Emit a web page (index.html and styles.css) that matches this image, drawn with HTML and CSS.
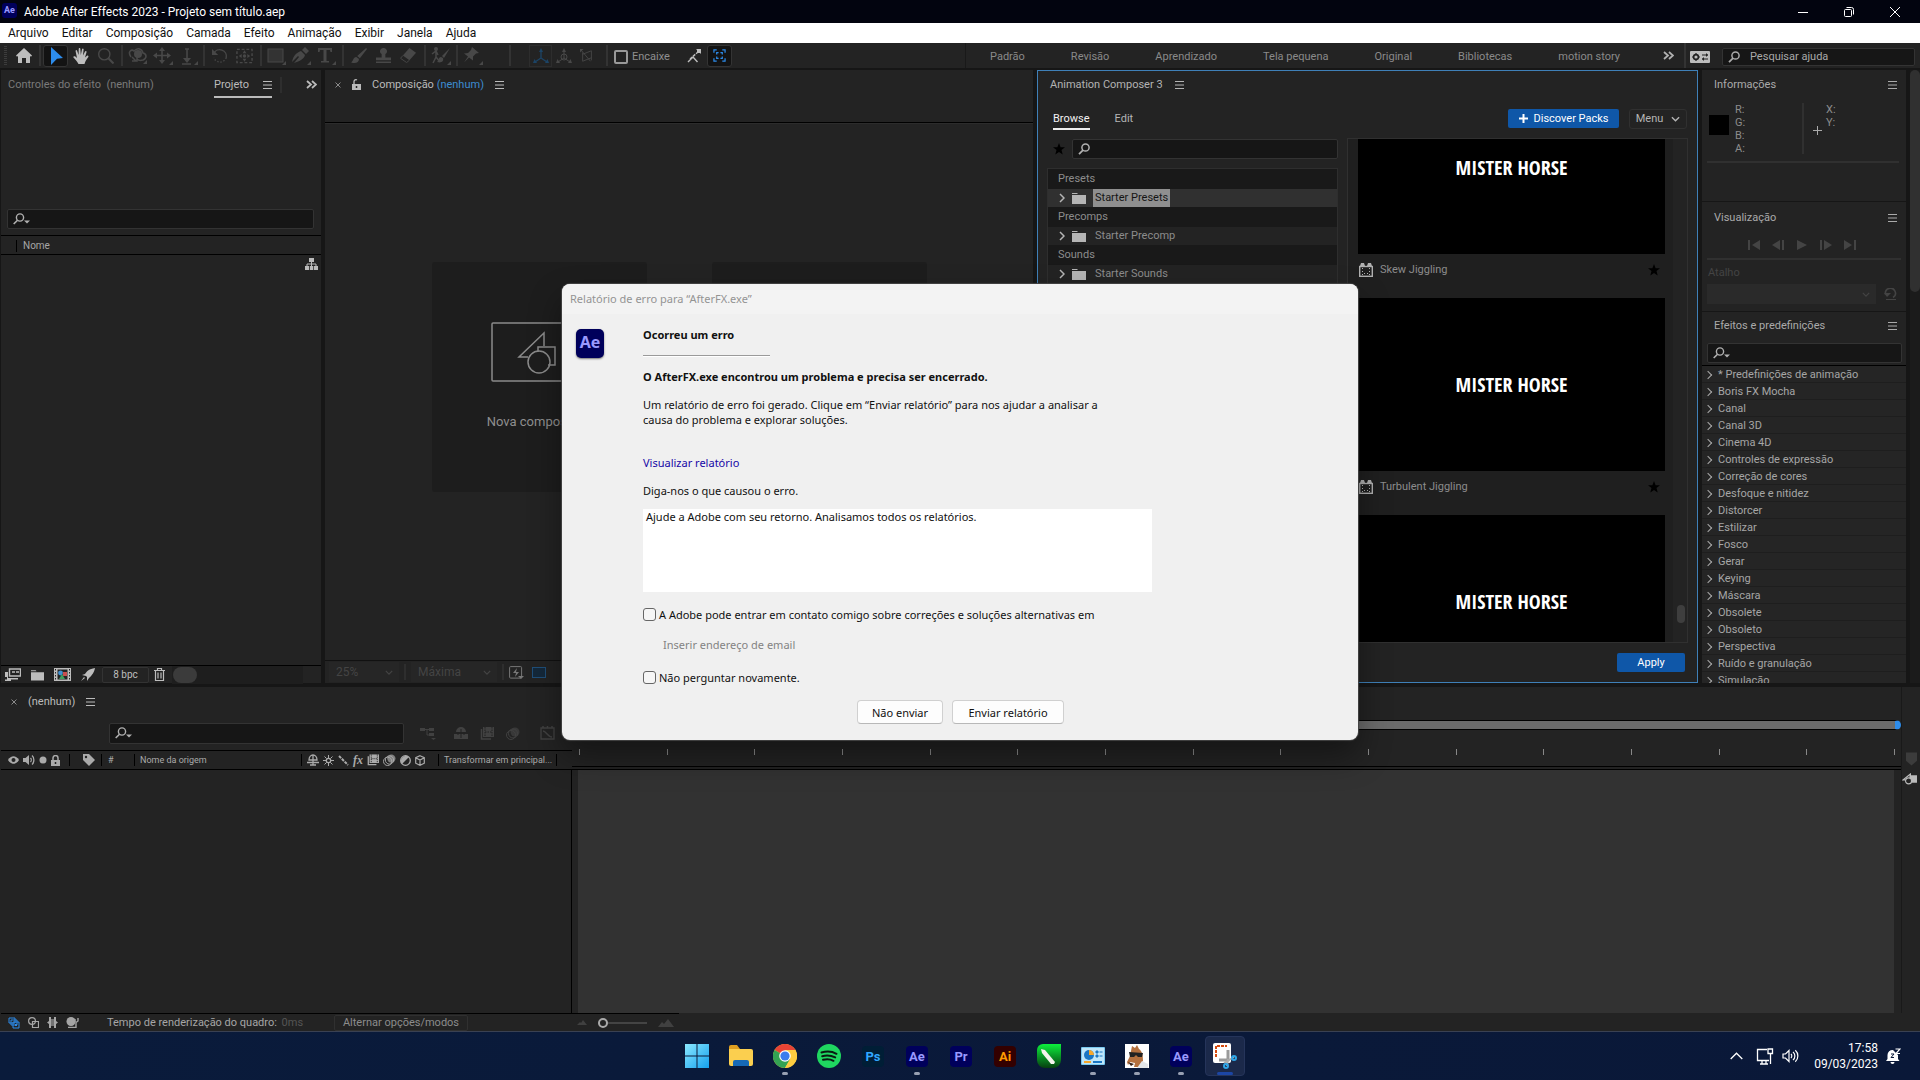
FILE: index.html
```
<!doctype html>
<html lang="pt-BR">
<head>
    <meta charset="utf-8">
    <meta name="viewport" content="width=device-width, initial-scale=1">
    <title>Adobe After Effects 2023 - Projeto sem título.aep</title>
    <link rel="stylesheet" href="styles.css">
</head>
<body>
    <svg class="sprite" aria-hidden="true">
        <symbol id="menu" viewBox="0 0 9 8"><path d="M0 .5h9M0 4h9M0 7.5h9" stroke="currentColor"/></symbol>
        <symbol id="more" viewBox="0 0 11 9"><path d="M1 1l4 3.500L1 8M6 1l4 3.500L6 8" fill="none" stroke="currentColor" stroke-width="1.800"/></symbol>
        <symbol id="chev-r" viewBox="0 0 6 10"><path d="M1 1l4 4-4 4" fill="none" stroke="currentColor" stroke-width="1.500"/></symbol>
        <symbol id="chev-d" viewBox="0 0 10 6"><path d="M1 1l4 4 4-4" fill="none" stroke="currentColor" stroke-width="1.500"/></symbol>
        <symbol id="x" viewBox="0 0 6 6"><path d="M.5.5l5 5M5.500.5l-5 5" stroke="currentColor"/></symbol>
        <symbol id="search" viewBox="0 0 12 12"><circle cx="7.500" cy="4.500" r="3.600" fill="none" stroke="currentColor" stroke-width="1.500"/><path d="M5 7.200L1 11.200" stroke="currentColor" stroke-width="1.800"/></symbol>
        <symbol id="search-d" viewBox="0 0 17 12"><circle cx="7" cy="4.500" r="3.600" fill="none" stroke="currentColor" stroke-width="1.400"/><path d="M4.500 7.200L.7 11" stroke="currentColor" stroke-width="1.600"/><path d="M11 7.500h6l-3 3z" fill="currentColor"/></symbol>
        <symbol id="star" viewBox="0 0 12 12"><path d="M6 0l1.600 4.200H12L8.500 7l1.200 4.600L6 9l-3.700 2.600L3.500 7 0 4.200h4.400z" fill="currentColor"/></symbol>
        <symbol id="folder" viewBox="0 0 14 12"><path d="M0 1h5l1 1H0zM0 3h14v9H0z" fill="currentColor"/></symbol>
        <symbol id="preset" viewBox="0 0 14 14"><path d="M2 0h3l1 3h2l1-3h3l1 3H1z" fill="currentColor"/><rect x=".7" y="3.500" width="12.600" height="9.800" fill="none" stroke="currentColor" stroke-width="1.400"/><path d="M3.500 5v8M10.500 5v8M5 10.500h5" stroke="currentColor" stroke-dasharray="1 2"/></symbol>
        <symbol id="home" viewBox="0 0 16 15"><path d="M8 0l8 7.500-1 1.200-1-.8V15h-4v-5H6v5H2V7.900l-1 .8L0 7.500z" fill="currentColor"/></symbol>
        <symbol id="select" viewBox="0 0 16 18"><path d="M3 0l12 11-6 .8L3 18z" fill="currentColor"/></symbol>
        <symbol id="hand" viewBox="0 0 16 16"><path d="M5.500 16C4 13 2 11 .3 9.200c0-1 1.500-1.300 2.300-.5L4 10 2.600 3.200c-.2-1.300 1.200-1.600 1.500-.4L5.600 7 5.700 1.200c0-1.500 1.700-1.500 1.700 0L7.800 7 9 1.300c.3-1.300 1.800-1 1.600.3L10 7.500l2-4c.6-1.100 1.900-.5 1.500.7L12 9.500l2-1.700c.8-.6 1.900.2 1.300 1.200C13 12 12.500 13 11.500 16z" fill="currentColor"/></symbol>
        <symbol id="zoom" viewBox="0 0 16 16"><circle cx="6.300" cy="6.300" r="5.600" fill="none" stroke="currentColor" stroke-width="1.400"/><path d="M10.300 10.300L15.500 15.500" stroke="currentColor" stroke-width="2"/></symbol>
        <symbol id="orbit" viewBox="0 0 20 16"><path d="M3 9C-1 3 4 1 6 3c4-4 8-2 9 2 4 1 4 5 0 7-3 1-5 0-6-1" fill="none" stroke="currentColor" stroke-width="1.600"/><circle cx="10" cy="6" r="4" fill="currentColor"/><path d="M4 9l4 4M4 13h5V9" fill="none" stroke="currentColor" stroke-width="1.500"/><path d="M19 12v4h-4z" fill="currentColor"/></symbol>
        <symbol id="pan" viewBox="0 0 20 18"><path d="M9 2v13M2 8.500h14" stroke="currentColor" stroke-width="1.600"/><path d="M9 0l3 4H6zM9 17l3-4H6zM0 8.500l4-3v6zM18 8.500l-4-3v6z" fill="currentColor"/><path d="M20 14v4h-4z" fill="currentColor"/></symbol>
        <symbol id="dolly" viewBox="0 0 20 18"><path d="M9 2v13M7 2h4M4 17h9" stroke="currentColor" stroke-width="1.600"/><path d="M9 16l4-5H5z" fill="currentColor"/><path d="M20 14v4h-4z" fill="currentColor"/></symbol>
        <symbol id="rotate" viewBox="0 0 18 18"><path d="M2 6a7.500 7.500 0 0 1 14 5" fill="none" stroke="currentColor" stroke-width="1.600"/><path d="M16 11a7.500 7.500 0 0 1-14 0" fill="none" stroke="currentColor" stroke-width="1.500" stroke-dasharray="1.500 2"/><path d="M0 1v7h7z" fill="currentColor"/></symbol>
        <symbol id="anchor" viewBox="0 0 18 16"><rect x="1" y="1" width="16" height="14" fill="none" stroke="currentColor" stroke-width="1.500" stroke-dasharray="3 2"/><circle cx="9" cy="8" r="1.800" fill="currentColor"/><path d="M9 2l2 3H7zM9 14l2-3H7zM3 8l3-2v4zM15 8l-3-2v4z" fill="currentColor"/></symbol>
        <symbol id="rect" viewBox="0 0 19 18"><rect x="1" y="2" width="15" height="13" fill="#333" stroke="currentColor"/><path d="M19 14v4h-4z" fill="currentColor"/></symbol>
        <symbol id="pen" viewBox="0 0 19 18"><path d="M0 15C1 9 4 6 9 4l4 4c-1 4-5 6-11 8l5-6-1-1z" fill="currentColor"/><path d="M10 3l3-3 4 4-3 3z" fill="currentColor"/><path d="M19 14v4h-4z" fill="currentColor"/></symbol>
        <symbol id="type" viewBox="0 0 19 18"><path d="M1 1h14v4h-1.500L13 3H9.500v11H12v1.500H4V14h2.500V3H3l-.5 2H1z" fill="currentColor"/><path d="M19 14v4h-4z" fill="currentColor"/></symbol>
        <symbol id="brush" viewBox="0 0 18 18"><path d="M17 0L7 9l3 2.500L18 1zM6 10c-4 0-3 5-6 6 4 2 9 1 9-3.500z" fill="currentColor"/></symbol>
        <symbol id="stamp" viewBox="0 0 18 16"><path d="M9 0a3.500 3.500 0 0 1 2 6.500V10h6v3H1v-3h6V6.500A3.500 3.500 0 0 1 9 0zM1 14.500h16V16H1z" fill="currentColor"/></symbol>
        <symbol id="eraser" viewBox="0 0 18 16"><path d="M10 0l7 5-7 8-7-5z" fill="currentColor"/><path d="M3 8l-2.500 3L7 15.500 10 13" fill="none" stroke="currentColor"/></symbol>
        <symbol id="roto" viewBox="0 0 20 18"><circle cx="5" cy="2" r="2" fill="currentColor"/><path d="M1 7l4-3 2 4M5 5v5l-3 6M5 10l4 5" fill="none" stroke="currentColor" stroke-width="1.500"/><path d="M19 1l-8 8 2 2zM10 10c-3 0-2 4-4 5 4 1 7 0 6-4z" fill="currentColor"/><path d="M20 14v4h-4z" fill="currentColor"/></symbol>
        <symbol id="pin" viewBox="0 0 20 18"><path d="M9 0l7 6-3 .5-3 3 0 4-4-3-5 5 4-6-4-3 4-.5 3-3z" fill="currentColor"/><path d="M20 14v4h-4z" fill="currentColor"/></symbol>
        <symbol id="axis" viewBox="0 0 16 16"><path d="M8 2v8L2 14M8 10l6 4" fill="none" stroke="currentColor" stroke-width="1.300"/><path d="M8 0l2 4H6zM0 15l1.500-4L4 15zM16 15l-1.500-4L12 15z" fill="currentColor"/></symbol>
        <symbol id="axis-w" viewBox="0 0 16 16"><path d="M8 2v8L2 14M8 10l6 4" fill="none" stroke="currentColor"/><circle cx="8" cy="9" r="3" fill="none" stroke="currentColor"/><path d="M8 0l2 4H6zM0 15l1.500-4L4 15zM16 15l-1.500-4L12 15z" fill="currentColor"/></symbol>
        <symbol id="axis-v" viewBox="0 0 16 16"><path d="M3 6l10-4v11M3 4v10l10-4M1 1l11 13" fill="none" stroke="currentColor"/><path d="M0 0h4L0 4z" fill="currentColor"/></symbol>
        <symbol id="snap" viewBox="0 0 14 14"><path d="M1 13l5-5 4.500 5" fill="none" stroke="currentColor" stroke-width="1.400"/><path d="M3 10L11 3" fill="none" stroke="currentColor" stroke-width="1.400" stroke-dasharray="3 1"/><path d="M9 0h5v5z" fill="currentColor"/><path d="M10 1h3v3h-3z" fill="currentColor"/></symbol>
        <symbol id="snap-box" viewBox="0 0 14 14"><path d="M1 4V1h3M10 1h3v3M13 10v3h-3M4 13H1v-3M4 6V4h2M8 4h2v2M10 8v2H8M6 10H4V8" fill="none" stroke="currentColor" stroke-width="1.300"/></symbol>
        <symbol id="settings" viewBox="0 0 20 12"><rect width="20" height="12" rx="1" fill="currentColor"/><circle cx="6" cy="6" r="2.400" fill="none" stroke="#232323" stroke-width="1.600"/><path d="M6 2v1.500M6 8.500V10M2 6h1.500M8.500 6H10M12 4h6M12 8h6" stroke="#232323" stroke-width="1.200"/><path d="M16 2l2 2-2 2zM14 6v4l-2-2z" fill="#232323"/></symbol>
        <symbol id="lock-open" viewBox="0 0 9 11"><path d="M0 5h9v6H0z" fill="currentColor"/><path d="M2 5V2.500a2 2 0 0 1 3-1.500" fill="none" stroke="currentColor" stroke-width="1.300"/><path d="M4.500 7v2" stroke="#232323" stroke-width="1.500"/></symbol>
        <symbol id="lock" viewBox="0 0 9 11"><path d="M0 5h9v6H0z" fill="currentColor"/><path d="M2 5V3a2.500 2.500 0 0 1 5 0v2" fill="none" stroke="currentColor" stroke-width="1.500"/><path d="M4.500 7v2" stroke="#232323" stroke-width="1.500"/></symbol>
        <symbol id="tree" viewBox="0 0 13 12"><path d="M4 0h5v4H4zM0 8h4v4H0zM9 8h4v4H9zM4.800 8h3.500v4H4.800z" fill="currentColor"/><path d="M6.500 4v4M2 8V6h9v2" fill="none" stroke="currentColor"/></symbol>
        <symbol id="footage" viewBox="0 0 16 13"><path d="M4.500 1h11v7h-11z" fill="none" stroke="currentColor" stroke-width="1.400"/><path d="M7 4h3M11 4h3" stroke="currentColor" stroke-width="1.500"/><path d="M0 4h3v6h10v1.500H6V13H0v-1.500h2V9H0z" fill="currentColor"/></symbol>
        <symbol id="film" viewBox="0 0 17 13"><path d="M0 0h17v13H0z" fill="currentColor"/><path d="M3.500 1.500h10v10h-10z" fill="#232323"/><path d="M1.500 1v11M15.500 1v11" stroke="#232323" stroke-dasharray="1.500 1.500"/><circle cx="6.500" cy="5" r="2.400" fill="#3f8fd0"/><path d="M9 4h4v4H9z" fill="#c94e4e"/><path d="M8 6l3 5H5z" fill="#3f9d5f"/></symbol>
        <symbol id="rocket" viewBox="0 0 14 13"><path d="M14 0C8 1 6 3 4 6L1 7l4 1 1 1v4l2-3c3-3 5-5 6-10zM3 9l-3 4 4-3z" fill="currentColor"/></symbol>
        <symbol id="trash" viewBox="0 0 11 13"><path d="M0 2.500h11M3.500 2V.5h4V2M1.500 3v9.500h8V3M4 4.500v6M7 4.500v6" fill="none" stroke="currentColor" stroke-width="1.200"/></symbol>
        <symbol id="fast" viewBox="0 0 15 13"><rect x=".6" y=".6" width="12" height="11.500" rx="1" fill="none" stroke="currentColor"/><path d="M8 2L4 7h3l-1 4 4-5H7z" fill="currentColor"/><path d="M9 10h6l-3 3z" fill="currentColor"/></symbol>
        <symbol id="flow" viewBox="0 0 16 13"><path d="M0 1h5v3H0zM9 1h5v3H9zM9 6h5v3H9z" fill="currentColor"/><path d="M5 2.500h4M7 2.500V8h2" stroke="currentColor" fill="none"/><path d="M11 11h5l-2.500 2z" fill="currentColor"/></symbol>
        <symbol id="shy" viewBox="0 0 14 12"><path d="M2 5a5 5 0 0 1 10 0zM0 7h14v5H0z" fill="currentColor"/><path d="M7 2v9M4 5v3M10 5v3" stroke="#232323"/></symbol>
        <symbol id="blend" viewBox="0 0 14 13"><path d="M3 0h11v10H3z" fill="currentColor"/><path d="M1.500 2v10H11" fill="none" stroke="currentColor" stroke-width="1.500"/><path d="M5 0v10M12 0v10M5 5h7" stroke="#232323" stroke-dasharray="1.500 1"/></symbol>
        <symbol id="blur" viewBox="0 0 14 13"><circle cx="9" cy="5" r="4.500" fill="currentColor" opacity=".7"/><circle cx="7" cy="6.500" r="4.500" fill="none" stroke="currentColor"/><circle cx="5" cy="8" r="4.500" fill="none" stroke="currentColor"/></symbol>
        <symbol id="graph" viewBox="0 0 15 14"><path d="M1 2h13v11H1z" fill="none" stroke="currentColor" stroke-width="1.300"/><path d="M3 5c3 0 5 6 9 6M3 0v2M7.500 0v2M12 0v2" fill="none" stroke="currentColor" stroke-width="1.500"/></symbol>
        <symbol id="eye" viewBox="0 0 11 8"><path d="M0 4c3-5 8-5 11 0-3 5-8 5-11 0z" fill="currentColor"/><circle cx="5.500" cy="4" r="2" fill="#232323"/></symbol>
        <symbol id="audio" viewBox="0 0 12 12"><path d="M0 4h2.500L6 1v10L2.500 8H0z" fill="currentColor"/><path d="M7.500 4c1 1 1 3 0 4M9 1.500c2.500 2 2.500 7 0 9" fill="none" stroke="currentColor" stroke-width="1.300"/></symbol>
        <symbol id="dot" viewBox="0 0 8 8"><circle cx="4" cy="4" r="3.500" fill="currentColor"/></symbol>
        <symbol id="tag" viewBox="0 0 12 12"><path d="M0 0h6l6 6-6 6-6-6z" fill="currentColor"/><circle cx="3" cy="3" r="1.200" fill="#232323"/></symbol>
        <symbol id="shy-s" viewBox="0 0 12 12"><path d="M2 6a4 5 0 0 1 8 0z" fill="none" stroke="currentColor" stroke-width="1.300"/><path d="M6 1v10M0 8.500h12M3 11h6" fill="none" stroke="currentColor" stroke-width="1.300"/></symbol>
        <symbol id="sun" viewBox="0 0 11 11"><circle cx="5.500" cy="5.500" r="2.200" fill="none" stroke="currentColor" stroke-width="1.300"/><path d="M5.500 0v3M5.500 8v3M0 5.500h3M8 5.500h3M1.500 1.500l2 2M7.500 7.500l2 2M9.500 1.500l-2 2M3.500 7.500l-2 2" stroke="currentColor"/></symbol>
        <symbol id="quality" viewBox="0 0 11 11"><path d="M1 1l9 9" stroke="currentColor" stroke-width="2" stroke-dasharray="3 1"/></symbol>
        <symbol id="adjust" viewBox="0 0 11 11"><circle cx="5.500" cy="5.500" r="4.800" fill="none" stroke="currentColor" stroke-width="1.300"/><path d="M9 2L2 9A5 5 0 0 1 9 2z" fill="currentColor"/></symbol>
        <symbol id="cube" viewBox="0 0 10 11"><path d="M5 .7l4.300 2v5.500L5 10.300.7 8.200V2.700zM.7 2.700L5 5l4.300-2.300M5 5v5" fill="none" stroke="currentColor" stroke-width="1.200"/></symbol>
        <symbol id="layers" viewBox="0 0 12 12"><path d="M1 1h6v5H1zM3 3h6v5H3zM5 5h6v6H5z" fill="#232323" stroke="currentColor"/><path d="M8 7v2" stroke="currentColor" stroke-width="2"/></symbol>
        <symbol id="pair" viewBox="0 0 11 11"><circle cx="4" cy="4" r="3.400" fill="none" stroke="currentColor" stroke-width="1.200"/><path d="M4.500 4.500h6v6h-6z" fill="none" stroke="currentColor" stroke-width="1.200"/></symbol>
        <symbol id="brace" viewBox="0 0 11 11"><path d="M2 0h2v11H2V7L0 5.500 2 4zM9 0H7v11h2V7l2-1.500L9 4z" fill="currentColor"/><path d="M4 2h3v7H4z" fill="currentColor" opacity=".6"/></symbol>
        <symbol id="snail" viewBox="0 0 13 11"><circle cx="5" cy="4.500" r="4.500" fill="currentColor"/><path d="M2 10.500h8V5.500L12 4V1M9 2v3" fill="none" stroke="currentColor" stroke-width="1.400"/></symbol>
        <symbol id="mtn-s" viewBox="0 0 10 5"><path d="M0 5l3-3 1 1 2-3 4 5z" fill="currentColor"/></symbol>
        <symbol id="mtn-l" viewBox="0 0 16 8"><path d="M0 8l4-5 2 2 4-5 6 8z" fill="currentColor"/></symbol>
        <symbol id="shapes" viewBox="0 0 16 12"><path d="M9 .7L1 7h8z" fill="#232323" stroke="currentColor" stroke-width="1.200"/><path d="M8 2h8v8H8z" fill="currentColor"/><circle cx="7" cy="8" r="3.200" fill="#232323" stroke="currentColor" stroke-width="1.200"/></symbol>
        <symbol id="marker" viewBox="0 0 12 14"><path d="M0 0h12v9l-6 5-6-5z" fill="currentColor"/></symbol>
        <symbol id="first" viewBox="0 0 12 10"><path d="M0 0h2v10H0zM12 0v10L4 5z" fill="currentColor"/></symbol>
        <symbol id="prev" viewBox="0 0 12 10"><path d="M8 0v10L0 5zM10 0h2v10h-2z" fill="currentColor"/></symbol>
        <symbol id="play" viewBox="0 0 12 10"><path d="M1 0v10l10-5z" fill="currentColor"/></symbol>
        <symbol id="next" viewBox="0 0 12 10"><path d="M0 0h2v10H0zM4 0v10l8-5z" fill="currentColor"/></symbol>
        <symbol id="last" viewBox="0 0 12 10"><path d="M0 0v10l8-5zM10 0h2v10h-2z" fill="currentColor"/></symbol>
        <symbol id="reset" viewBox="0 0 13 12"><path d="M2 6h-.5A5 5 0 1 1 9 9.500" fill="none" stroke="currentColor" stroke-width="1.600"/><path d="M0 5h7L3 9zM2 11h10v1H2z" fill="currentColor"/></symbol>
    </svg>

    <header class="titlebar">
        <span class="ae-mini">Ae</span>
        <h1>Adobe After Effects 2023 - Projeto sem título.aep</h1>
        <div class="window-buttons">
            <button aria-label="Minimizar"><svg width="10" height="10"><path d="M0 5.500h10" stroke="#fff"/></svg></button>
            <button aria-label="Restaurar"><svg width="10" height="10" fill="none" stroke="#fff"><rect x=".5" y="2.500" width="7" height="7" rx="1"/><path d="M2.500.5h5a2 2 0 0 1 2 2v5"/></svg></button>
            <button aria-label="Fechar"><svg width="10" height="10"><path d="M0 0l10 10M10 0L0 10" stroke="#fff"/></svg></button>
        </div>
    </header>

    <nav class="menubar">
        <a href="#">Arquivo</a><a href="#">Editar</a><a href="#">Composição</a><a href="#">Camada</a><a href="#">Efeito</a><a href="#">Animação</a><a href="#">Exibir</a><a href="#">Janela</a><a href="#">Ajuda</a>
    </nav>

    <div class="toolbar">
        <span class="grip"></span>
        <div class="tools first lit"><button aria-label="Início"><svg width="16" height="15"><use href="#home"/></svg></button></div>
        <div class="tools lit">
            <button class="on" aria-label="Seleção"><svg width="16" height="18"><use href="#select"/></svg></button>
            <button aria-label="Mão"><svg width="16" height="16"><use href="#hand"/></svg></button>
            <button class="dim" aria-label="Zoom"><svg width="16" height="16"><use href="#zoom"/></svg></button>
        </div>
        <div class="tools">
            <button aria-label="Órbita"><svg width="20" height="16"><use href="#orbit"/></svg></button>
            <button aria-label="Panorâmica"><svg width="20" height="18"><use href="#pan"/></svg></button>
            <button aria-label="Dolly"><svg width="20" height="18"><use href="#dolly"/></svg></button>
        </div>
        <div class="tools">
            <button aria-label="Rotação"><svg width="16" height="16"><use href="#rotate"/></svg></button>
            <button aria-label="Ponto de ancoragem"><svg width="17" height="16"><use href="#anchor"/></svg></button>
        </div>
        <div class="tools">
            <button aria-label="Retângulo"><svg width="19" height="18"><use href="#rect"/></svg></button>
            <button aria-label="Caneta"><svg width="19" height="18"><use href="#pen"/></svg></button>
            <button aria-label="Texto"><svg width="19" height="18"><use href="#type"/></svg></button>
        </div>
        <div class="tools">
            <button aria-label="Pincel"><svg width="16" height="16"><use href="#brush"/></svg></button>
            <button aria-label="Carimbo"><svg width="17" height="15"><use href="#stamp"/></svg></button>
            <button aria-label="Borracha"><svg width="17" height="15"><use href="#eraser"/></svg></button>
        </div>
        <div class="tools"><button aria-label="Roto"><svg width="20" height="18"><use href="#roto"/></svg></button></div>
        <div class="tools pins"><button aria-label="Marionete"><svg width="20" height="18"><use href="#pin"/></svg></button></div>
        <div class="tools axes">
            <button class="axis-on" aria-label="Eixo local"><svg width="16" height="16"><use href="#axis"/></svg></button>
            <button aria-label="Eixo global"><svg width="16" height="16"><use href="#axis-w"/></svg></button>
            <button aria-label="Eixo de exibição"><svg width="14" height="14"><use href="#axis-v"/></svg></button>
        </div>
        <div class="tools snapping">
            <label class="snap"><input type="checkbox">Encaixe</label>
            <button class="lit-btn" aria-label="Encaixar bordas"><svg width="14" height="14"><use href="#snap"/></svg></button>
            <button class="on" aria-label="Encaixar recursos"><svg width="13" height="13"><use href="#snap-box"/></svg></button>
        </div>
        <nav class="workspaces">
            <a href="#">Padrão</a><a href="#">Revisão</a><a href="#">Aprendizado</a><a href="#">Tela pequena</a><a href="#">Original</a><a href="#">Bibliotecas</a><a href="#">motion story</a>
            <button aria-label="Mais"><svg width="11" height="9"><use href="#more"/></svg></button>
        </nav>
        <div class="help">
            <button aria-label="Espaço de trabalho"><svg width="20" height="12"><use href="#settings"/></svg></button>
            <label class="field"><svg width="12" height="12"><use href="#search"/></svg><input type="text" aria-label="Pesquisar ajuda" value="Pesquisar ajuda"></label>
        </div>
    </div>

    <main class="workspace">
        <section class="panel project">
            <div class="tabs">
                <a href="#">Controles do efeito&nbsp; (nenhum)</a>
                <a href="#" class="active">Projeto<svg width="9" height="8"><use href="#menu"/></svg></a>
                <span class="bar"></span>
                <button aria-label="Mais painéis"><svg width="11" height="9"><use href="#more"/></svg></button>
            </div>
            <label class="field project-search"><svg width="17" height="12"><use href="#search-d"/></svg><input type="text" aria-label="Pesquisar projeto"></label>
            <div class="columns"><span>Nome</span></div>
            <div class="assets"><svg width="13" height="12"><use href="#tree"/></svg></div>
            <div class="project-foot">
                <button aria-label="Interpretar"><svg width="16" height="13"><use href="#footage"/></svg></button>
                <button aria-label="Nova pasta"><svg width="13" height="12"><use href="#folder"/></svg></button>
                <button aria-label="Nova composição"><svg width="17" height="13"><use href="#film"/></svg></button>
                <button aria-label="Configurações"><svg width="14" height="13"><use href="#rocket"/></svg></button>
                <button class="depth">8 bpc</button>
                <button aria-label="Excluir"><svg width="11" height="13"><use href="#trash"/></svg></button>
                <span class="track"><i></i></span>
            </div>
        </section>

        <section class="panel comp">
            <div class="comp-tab">
                <svg class="close" width="6" height="6"><use href="#x"/></svg>
                <svg width="9" height="11"><use href="#lock-open"/></svg>
                <span>Composição <em>(nenhum)</em></span>
                <svg width="9" height="8"><use href="#menu"/></svg>
            </div>
            <div class="stage">
                <button class="card">
                    <svg width="96" height="60" fill="none" stroke="#8a8a8a" stroke-width="1.500"><rect x="1" y="1" width="94" height="58" rx="1"/><path d="M53 24V11L28 35h9M47 30v-5h17v18h-7"/><circle cx="48" cy="40" r="11"/></svg>
                    <span>Nova composição</span>
                </button>
                <button class="card" aria-label="Nova composição com base no item"></button>
            </div>
            <div class="comp-foot">
                <label class="select zoom-level"><select aria-label="Ampliação"><option>25%</option></select><svg width="8" height="5"><use href="#chev-d"/></svg></label>
                <span class="bar"></span>
                <label class="select resolution"><select aria-label="Resolução"><option>Máxima</option></select><svg width="8" height="5"><use href="#chev-d"/></svg></label>
                <span class="bar"></span>
                <svg class="fast" width="15" height="13"><use href="#fast"/></svg>
                <i class="blue-box"></i>
            </div>
        </section>

        <section class="panel composer">
            <div class="composer-title">Animation Composer 3<svg width="9" height="8"><use href="#menu"/></svg></div>
            <div class="composer-nav">
                <a href="#" class="active">Browse</a>
                <a href="#">Edit</a>
                <button class="primary"><svg width="9" height="9"><path d="M4.500 0v9M0 4.500h9" stroke="#fff" stroke-width="2"/></svg>Discover Packs</button>
                <button class="menu-btn">Menu<svg width="9" height="6"><use href="#chev-d"/></svg></button>
            </div>
            <div class="composer-body">
                <div class="library">
                    <div class="library-search">
                        <svg class="star" width="12" height="12"><use href="#star"/></svg>
                        <label class="field"><svg width="12" height="12"><use href="#search"/></svg><input type="text" aria-label="Search presets"></label>
                    </div>
                    <div class="packs">
                        <h3>Presets</h3>
                        <p class="selected"><svg width="6" height="10"><use href="#chev-r"/></svg><svg width="14" height="12"><use href="#folder"/></svg><span>Starter Presets</span></p>
                        <h3>Precomps</h3>
                        <p><svg width="6" height="10"><use href="#chev-r"/></svg><svg width="14" height="12"><use href="#folder"/></svg><span>Starter Precomp</span></p>
                        <h3>Sounds</h3>
                        <p><svg width="6" height="10"><use href="#chev-r"/></svg><svg width="14" height="12"><use href="#folder"/></svg><span>Starter Sounds</span></p>
                    </div>
                </div>
                <div class="previews">
                    <div class="preview-list">
                        <figure><div class="thumb">MISTER HORSE</div><figcaption><svg width="14" height="14"><use href="#preset"/></svg>Skew Jiggling<svg class="star" width="12" height="12"><use href="#star"/></svg></figcaption></figure>
                        <figure><div class="thumb">MISTER HORSE</div><figcaption><svg width="14" height="14"><use href="#preset"/></svg>Turbulent Jiggling<svg class="star" width="12" height="12"><use href="#star"/></svg></figcaption></figure>
                        <figure><div class="thumb">MISTER HORSE</div></figure>
                    </div>
                    <div class="scroll"><i></i></div>
                </div>
            </div>
            <div class="composer-foot"><button class="primary apply">Apply</button></div>
        </section>

        <aside class="side">
            <section class="panel info">
                <h2>Informações<svg width="9" height="8"><use href="#menu"/></svg></h2>
                <div class="info-body">
                    <i class="swatch"></i>
                    <div class="values"><span>R:</span><span>G:</span><span>B:</span><span>A:</span></div>
                    <svg width="9" height="9"><path d="M4.500 0v9M0 4.500h9" stroke="#aaa"/></svg>
                    <div class="values"><span>X:</span><span>Y:</span></div>
                </div>
            </section>
            <section class="panel preview">
                <h2>Visualização<svg width="9" height="8"><use href="#menu"/></svg></h2>
                <div class="transport">
                    <svg width="12" height="10"><use href="#first"/></svg><svg width="12" height="10"><use href="#prev"/></svg><svg width="12" height="10"><use href="#play"/></svg><svg width="12" height="10"><use href="#next"/></svg><svg width="12" height="10"><use href="#last"/></svg>
                </div>
                <label class="shortcut-label" for="shortcut">Atalho</label>
                <div class="shortcut">
                    <div class="select"><select id="shortcut"><option></option></select><svg width="8" height="5"><use href="#chev-d"/></svg></div>
                    <svg width="13" height="12"><use href="#reset"/></svg>
                </div>
            </section>
            <section class="panel effects">
                <h2>Efeitos e predefinições<svg width="9" height="8"><use href="#menu"/></svg></h2>
                <label class="field"><svg width="17" height="12"><use href="#search-d"/></svg><input type="text" aria-label="Pesquisar efeitos"></label>
                <ul>
                    <li>* Predefinições de animação</li>
                    <li>Boris FX Mocha</li>
                    <li>Canal</li>
                    <li>Canal 3D</li>
                    <li>Cinema 4D</li>
                    <li>Controles de expressão</li>
                    <li>Correção de cores</li>
                    <li>Desfoque e nitidez</li>
                    <li>Distorcer</li>
                    <li>Estilizar</li>
                    <li>Fosco</li>
                    <li>Gerar</li>
                    <li>Keying</li>
                    <li>Máscara</li>
                    <li>Obsolete</li>
                    <li>Obsoleto</li>
                    <li>Perspectiva</li>
                    <li>Ruído e granulação</li>
                    <li>Simulação</li>
                </ul>
            </section>
        </aside>
        <div class="side-scroll"><i></i></div>
    </main>

    <section class="timeline">
        <div class="timeline-main">
            <div class="layers">
                <div class="comp-tab">
                    <svg class="close" width="6" height="6"><use href="#x"/></svg>
                    <span>(nenhum)</span>
                    <svg width="9" height="8"><use href="#menu"/></svg>
                </div>
                <div class="layer-tools">
                    <label class="field"><svg width="17" height="12"><use href="#search-d"/></svg><input type="text" aria-label="Pesquisar camadas"></label>
                    <svg width="16" height="13"><use href="#flow"/></svg>
                    <svg width="14" height="12"><use href="#shy"/></svg>
                    <svg width="14" height="13"><use href="#blend"/></svg>
                    <svg width="14" height="13"><use href="#blur"/></svg>
                    <svg width="15" height="14"><use href="#graph"/></svg>
                </div>
                <div class="layer-head">
                    <span class="switches"><svg width="11" height="8"><use href="#eye"/></svg><svg width="12" height="12"><use href="#audio"/></svg><svg width="8" height="8"><use href="#dot"/></svg><svg width="9" height="11"><use href="#lock"/></svg></span>
                    <span class="label-col"><svg width="12" height="12"><use href="#tag"/></svg></span>
                    <span class="num-col">#</span>
                    <span class="name-col">Nome da origem</span>
                    <span class="modes"><svg width="12" height="12"><use href="#shy-s"/></svg><svg width="11" height="11"><use href="#sun"/></svg><svg width="11" height="11"><use href="#quality"/></svg><em>fx</em><svg width="12" height="12"><use href="#blend"/></svg><svg width="13" height="12"><use href="#blur"/></svg><svg width="11" height="11"><use href="#adjust"/></svg><svg width="10" height="11"><use href="#cube"/></svg></span>
                    <span class="parent-col">Transformar em principal...</span>
                </div>
                <div class="layer-list"></div>
            </div>
            <div class="ruler">
                <div class="work-area"></div>
                <div class="ticks"><i></i><i></i><i></i><i></i><i></i><i></i><i></i><i></i><i></i><i></i><i></i><i></i><i></i><i></i><i></i><i></i></div>
                <div class="gutter"></div>
                <div class="lanes"></div>
            </div>
            <div class="markers">
                <svg class="marker" width="11" height="14"><use href="#marker"/></svg>
                <svg width="15" height="12"><use href="#shapes"/></svg>
            </div>
        </div>
        <div class="timeline-foot">
            <div class="render">
                <svg class="blue" width="12" height="12"><use href="#layers"/></svg>
                <svg width="11" height="11"><use href="#pair"/></svg>
                <svg width="11" height="11"><use href="#brace"/></svg>
                <svg width="13" height="11"><use href="#snail"/></svg>
                <p>Tempo de renderização do quadro: <b>0ms</b></p>
                <button>Alternar opções/modos</button>
            </div>
            <div class="zoomer">
                <svg width="10" height="5"><use href="#mtn-s"/></svg>
                <input type="range" aria-label="Zoom da linha do tempo" value="0">
                <svg width="16" height="8"><use href="#mtn-l"/></svg>
            </div>
        </div>
    </section>

    <footer class="taskbar">
        <div class="apps">
            <a href="#" aria-label="Iniciar"><svg width="24" height="24"><defs><linearGradient id="win" x1="0" y1="0" x2="1" y2="1"><stop offset="0" stop-color="#8be8ff"/><stop offset="1" stop-color="#14a0ee"/></linearGradient></defs><path d="M0 0h11.500v11.500H0zM12.500 0H24v11.500H12.500zM0 12.500h11.500V24H0zM12.500 12.500H24V24H12.500z" fill="url(#win)"/></svg></a>
            <a href="#" aria-label="Explorador"><svg width="24" height="22"><path d="M0 2a2 2 0 0 1 2-2h6l3 4h-11z" fill="#e0a021"/><path d="M0 4h22a2 2 0 0 1 2 2v13a2 2 0 0 1-2 2H2a2 2 0 0 1-2-2z" fill="#fbcf4f"/><path d="M4 21v-4a2 2 0 0 1 2-2h12a2 2 0 0 1 2 2v4z" fill="#1769b5"/></svg></a>
            <a href="#" class="open" aria-label="Chrome"><svg width="24" height="24"><circle cx="12" cy="12" r="12" fill="#ffcd40"/><path d="M12 12L1.600 6A12 12 0 0 1 22.400 6z" fill="#e94335"/><path d="M12 12L1.600 6A12 12 0 0 0 12 24z" fill="#34a353"/><path d="M12 24l5.200-9-5.200-3-4 4z" fill="#34a353"/><path d="M17.200 15L12 24A12 12 0 0 0 22.400 6H12z" fill="#ffcd40"/><circle cx="12" cy="12" r="5.800" fill="#fff"/><circle cx="12" cy="12" r="4.600" fill="#3b7ded"/></svg></a>
            <a href="#" aria-label="Spotify"><svg width="24" height="24"><circle cx="12" cy="12" r="12" fill="#1fd760"/><path d="M4.500 8.500c5-1.500 11-1 15 1.300M5.200 12.200c4.500-1.200 9-.7 13 1.200M6 15.800c4-1 7.500-.6 10.500 1" fill="none" stroke="#0a1b12" stroke-width="2" stroke-linecap="round"/></svg></a>
            <a href="#"><span class="tile ps">Ps</span></a>
            <a href="#" class="open"><span class="tile ae">Ae</span></a>
            <a href="#"><span class="tile pr">Pr</span></a>
            <a href="#"><span class="tile ai">Ai</span></a>
            <a href="#" aria-label="CorelDRAW"><svg width="24" height="24"><defs><linearGradient id="corel" x1="0" y1="0" x2="0" y2="1"><stop offset="0" stop-color="#0cf03c"/><stop offset="1" stop-color="#073f10"/></linearGradient></defs><path d="M6 0h18v16a8 8 0 0 1-8 8H8a8 8 0 0 1-8-8V6a6 6 0 0 1 6-6z" fill="url(#corel)"/><path d="M4 5l4 1 10 12-1 2-3 0L5 9z" fill="#f4f4ec"/></svg></a>
            <a href="#" class="open" aria-label="Painel"><svg width="24" height="18"><rect width="24" height="18" rx="1" fill="#79c9f0"/><rect x="1" y="1" width="22" height="16" fill="#bfe6fa"/><circle cx="8" cy="8" r="5" fill="#1a76c4"/><path d="M8 8V3a5 5 0 0 1 5 5z" fill="#f6a72c"/><path d="M15 4h2v2h-2zM15 8h2v2h-2zM18.500 5h3M18.500 9h3" fill="#1a76c4" stroke="#1a76c4"/><path d="M3 15h7" stroke="#f6a72c" stroke-width="2"/><path d="M12 15h9" stroke="#1a76c4" stroke-width="2"/></svg></a>
            <a href="#" class="open" aria-label="Mister Horse"><svg width="24" height="24"><rect width="24" height="24" fill="#fff"/><path d="M6 7l1-5 3 2 2-3 2 4c3 2 4 6 4 12l-3 6H9l1-4-5-1-2 3-1-3 3-6z" fill="#b5713f"/><path d="M4 8l14 1-1 4h-4l-2-2-2 2H5z" fill="#222"/><path d="M3 18l6 2-3 2z" fill="#3b2216"/><path d="M17 17l6 3v4H12z" fill="#e3e6ea"/></svg></a>
            <a href="#" class="open"><span class="tile ae">Ae</span></a>
            <a href="#" class="current" aria-label="Ferramenta de Captura"><svg width="24" height="26"><rect width="18" height="20" rx="2" fill="#fff"/><path d="M3 14V3h11" fill="none" stroke="#d64b12" stroke-width="2" stroke-dasharray="3 1"/><path d="M15 7v10H6" fill="none" stroke="#9b9b9b" stroke-width="3"/><path d="M11 20l10-6M15 16l-1 7" stroke="#aaa" stroke-width="2"/><circle cx="21" cy="15" r="2" fill="none" stroke="#2ea6e8" stroke-width="2"/><circle cx="13" cy="23" r="2" fill="none" stroke="#2ea6e8" stroke-width="2"/></svg></a>
        </div>
        <div class="tray">
            <svg width="13" height="8"><path d="M.7 7L6.500 1.200 12.300 7" fill="none" stroke="#fff" stroke-width="1.300"/></svg>
            <svg width="18" height="17" fill="none" stroke="#fff" stroke-width="1.300"><path d="M11 1.500H1.500v11H13M4 16h8M6 13v3M10 13v3M12 1h4.500v4.500H12zM14.500 6v10"/></svg>
            <svg width="17" height="14" fill="none" stroke="#fff" stroke-width="1.200"><path d="M1 5h2.500L7 1.500v11L3.500 9H1zM9 5c1 1 1 3 0 4M11 3c2.500 2 2.500 6 0 8M13.300 1.200c3.400 3 3.400 8.600 0 11.600"/></svg>
            <time>17:58<br>09/03/2023</time>
            <svg width="15" height="16"><path d="M1.500 11V7A5 5 0 0 1 7 2l5 5v4l1.500 2H0z" fill="#fff"/><path d="M4.500 14h4a2 2 0 0 1-4 0z" fill="#fff"/><path d="M5 6h3l-3 3.500h3" stroke="#0a1838" fill="none"/><path d="M9.500 1H14l-4 4.500h4" stroke="#fff" stroke-width="1.200" fill="none"/></svg>
        </div>
    </footer>

    <div class="dialog" role="dialog" aria-labelledby="dialog-title">
        <div class="dialog-title" id="dialog-title">Relatório de erro para “AfterFX.exe”</div>
        <div class="dialog-body">
            <span class="ae-logo">Ae</span>
            <form>
                <h2>Ocorreu um erro</h2>
                <hr>
                <h3>O AfterFX.exe encontrou um problema e precisa ser encerrado.</h3>
                <p>Um relatório de erro foi gerado. Clique em “Enviar relatório” para nos ajudar a analisar a<br>causa do problema e explorar soluções.</p>
                <a href="#">Visualizar relatório</a>
                <label class="ask" for="cause">Diga-nos o que causou o erro.</label>
                <textarea id="cause">Ajude a Adobe com seu retorno. Analisamos todos os relatórios.</textarea>
                <label class="check"><input type="checkbox">A Adobe pode entrar em contato comigo sobre correções e soluções alternativas em</label>
                <input class="email" type="text" aria-label="Email" placeholder="Inserir endereço de email">
                <label class="check"><input type="checkbox">Não perguntar novamente.</label>
                <div class="actions">
                    <button type="button">Não enviar</button>
                    <button type="button">Enviar relatório</button>
                </div>
            </form>
        </div>
    </div>
</body>
</html>
```
FILE: styles.css
```
* {
    box-sizing: border-box;
    margin: 0;
    padding: 0;
}

body {
    display: grid;
    grid-template-rows: 23px 20px 27px minmax(0, 1fr) 345px 48px;
    height: 100vh;
    position: relative;
    overflow: hidden;
    background: #161616;
    color: #a6a6a6;
    font: 11px/14px Roboto, "Liberation Sans", sans-serif;
}

button, input, select, textarea {
    font: inherit;
    color: inherit;
    background: none;
    border: 0;
    outline: 0;
}

a {
    color: inherit;
    text-decoration: none;
}

svg {
    display: block;
    flex: none;
}

em, b {
    font-style: normal;
    font-weight: 400;
}

.sprite {
    position: absolute;
    width: 0;
    height: 0;
}

.panel {
    background: #232323;
    min-width: 0;
    min-height: 0;
}

.field {
    display: flex;
    align-items: center;
    gap: 10px;
    padding: 0 5px;
    background: #161616;
    border: 1px solid #333;
    border-radius: 2px;
    color: #b0b0b0;
    min-width: 0;
}

.field input {
    flex: 1;
    min-width: 0;
}

/* title and menu */
.titlebar {
    display: flex;
    align-items: center;
    gap: 7px;
    padding-left: 2px;
    background: #02040f;
    color: #fff;
}

.titlebar h1 {
    font-size: 12px;
    font-weight: 400;
}

.ae-mini {
    width: 15px;
    height: 15px;
    border-radius: 3px;
    background: #00005b;
    color: #9999ff;
    font-size: 9px;
    font-weight: 700;
    line-height: 14px;
    text-align: center;
    margin-bottom: 2px;
}

.window-buttons {
    display: flex;
    margin-left: auto;
    padding-right: 2px;
}

.window-buttons button {
    width: 46px;
    height: 20px;
    display: grid;
    place-items: center;
}

.menubar {
    display: flex;
    align-items: center;
    gap: 13px;
    padding-left: 8px;
    background: #fff;
    color: #111;
    font-size: 12px;
}

/* toolbar */
.toolbar {
    display: flex;
    align-items: center;
    background: #232323;
    border-bottom: 2px solid #161616;
    color: #484848;
}

.grip {
    width: 3px;
    height: 19px;
    margin-left: 4px;
    background: repeating-linear-gradient(#3c3c3c 0 1px, transparent 1px 2px);
}

.tools {
    display: flex;
    align-items: center;
    height: 21px;
    padding: 0 3px 0 2px;
    border-left: 2px solid #333;
}

.tools.first {
    border-color: transparent;
}

.tools button {
    display: grid;
    place-items: center;
    width: 25px;
    height: 22px;
}

.tools.lit, .lit-btn {
    color: #bdbdbd;
}

.tools .dim {
    color: #484848;
}

.tools .on {
    color: #2d8ceb;
    background: #131313;
    border: 1px solid #343434;
    border-radius: 3px;
}

.tools.pins {
    width: 53px;
}

.tools.axes {
    width: 97px;
    padding-left: 18px;
}

.tools.axes button {
    width: 23px;
}

.tools .axis-on {
    color: #1c4466;
    border: 1px solid #2d2d2d;
}

.tools.snapping {
    padding-left: 6px;
}

.snap {
    display: flex;
    align-items: center;
    gap: 4px;
    margin-right: 12px;
    padding-top: 2px;
    color: #8f8f8f;
}

.snap input {
    appearance: none;
    width: 14px;
    height: 14px;
    border: 2px solid #999;
    border-radius: 2px;
}

.workspaces {
    display: flex;
    align-items: center;
    align-self: stretch;
    margin-left: auto;
    padding: 2px 0 0 1px;
    border-left: 1px solid #191919;
    color: #8a8a8a;
}

.workspaces a {
    padding: 0 23px;
}

.workspaces button {
    display: grid;
    padding: 0 10px 2px 20px;
    color: #b0b0b0;
}

.help {
    display: flex;
    align-items: center;
    align-self: stretch;
    gap: 12px;
    padding: 2px 5px 0 4px;
    border-left: 2px solid #333;
    color: #bdbdbd;
}

.help .field {
    width: 193px;
    height: 18px;
    color: #aaa;
}

/* upper workspace */
.workspace {
    display: grid;
    grid-template-columns: 320px minmax(0, 1fr) 661px 204px 10px;
    gap: 4px;
    padding: 0 0 4px 1px;
}

.project {
    display: flex;
    flex-direction: column;
}

.tabs {
    display: flex;
    align-items: center;
    height: 29px;
    margin-bottom: 110px;
    padding: 0 4px 0 7px;
    color: #7a7a7a;
}

.tabs .active {
    display: flex;
    align-items: center;
    gap: 14px;
    height: 26px;
    margin: 1px 8px 0 auto;
    padding-top: 2px;
    border-bottom: 2px solid #bbb;
    color: #bbb;
}

.bar {
    width: 2px;
    height: 16px;
    background: #2e2e2e;
}

.tabs button {
    margin-left: 24px;
    color: #bbb;
}

.project-search {
    height: 20px;
    margin: 0 7px 6px 6px;
}

.columns {
    height: 20px;
    padding: 4px 0 0 15px;
    border-top: 1px solid #000;
    border-bottom: 1px solid #000;
    font-size: 10px;
}

.columns span {
    display: block;
    line-height: 12px;
    padding-left: 6px;
    border-left: 1px solid #000;
}

.assets {
    flex: 1;
    padding: 3px 3px;
    color: #bbb;
}

.assets svg {
    margin-left: auto;
}

.project-foot {
    display: flex;
    align-items: center;
    gap: 9px;
    height: 18px;
    padding-left: 4px;
    border-top: 1px solid #000;
    color: #bdbdbd;
}

.project-foot button + button {
    margin-left: 1px;
}

.depth {
    width: 47px;
    height: 16px;
    border: 1px solid #333;
    border-radius: 2px;
    font-size: 10px;
}

.project-foot .depth, .project-foot .depth + button {
    margin: 0 -2px;
}

.track {
    flex: 1;
    height: 18px;
    margin-right: 18px;
    background: #1e1e1e;
}

.track i {
    display: block;
    width: 24px;
    height: 16px;
    margin: 1px;
    border-radius: 8px;
    background: #3b3b3b;
}

.comp {
    display: flex;
    flex-direction: column;
}

.comp-tab {
    display: flex;
    align-items: center;
    gap: 11px;
    height: 29px;
    padding-left: 10px;
    color: #bbb;
}

.comp-tab .close {
    color: #8a8a8a;
}

.comp-tab em {
    color: #3d8bd0;
}

.stage {
    display: flex;
    flex: 1;
    align-items: center;
    justify-content: center;
    gap: 65px;
    margin-top: 23px;
    padding-bottom: 30px;
    border-top: 1px solid #000;
    box-shadow: inset 0 1px #2c2c2c;
}

.card {
    display: flex;
    flex-direction: column;
    align-items: center;
    gap: 33px;
    width: 215px;
    height: 230px;
    padding-top: 60px;
    background: #1d1d1d;
    border-radius: 3px;
    color: #8f8f8f;
    font-size: 13px;
}

.comp-foot {
    display: flex;
    align-items: center;
    gap: 5px;
    height: 23px;
    padding-left: 4px;
    border-top: 1px solid #111;
    color: #444;
}

.comp-foot .fast {
    color: #777;
}

.select {
    position: relative;
    display: block;
    background: #262626;
}

.select select {
    appearance: none;
    display: block;
    width: 100%;
    height: 20px;
    padding-left: 7px;
    font-size: 12px;
}

.select svg {
    position: absolute;
    right: 6px;
    top: 8px;
}

.zoom-level {
    width: 70px;
}

.resolution {
    width: 86px;
}

.blue-box {
    width: 14px;
    height: 11px;
    margin-left: 3px;
    border: 1px solid #1f4e78;
    background: #14283a;
}

/* composer panel */
.composer {
    display: flex;
    flex-direction: column;
    padding: 0 9px;
    border: 1px solid #3f80b8;
}

.composer-title {
    display: flex;
    align-items: center;
    gap: 12px;
    height: 27px;
    padding-left: 3px;
    color: #b3b3b3;
}

.composer-nav {
    display: flex;
    align-items: center;
    height: 40px;
    padding: 1px 1px 0 6px;
    color: #b5b5b5;
}

.composer-nav a {
    height: 22px;
    margin-right: 25px;
    padding-top: 4px;
}

.composer-nav .active {
    border-bottom: 2px solid #eee;
    color: #f2f2f2;
}

.primary {
    display: flex;
    align-items: center;
    justify-content: center;
    gap: 6px;
    height: 19px;
    border-radius: 2px;
    background: #0f57a8;
    color: #fff;
}

.composer-nav .primary {
    width: 111px;
    margin-left: auto;
}

.menu-btn {
    display: flex;
    align-items: center;
    justify-content: center;
    gap: 8px;
    width: 58px;
    height: 20px;
    margin-left: 10px;
    border: 1px solid #303030;
    border-radius: 3px;
}

.composer-body {
    display: flex;
    flex: 1;
    gap: 9px;
    min-height: 0;
}

.library {
    width: 291px;
    display: flex;
    flex-direction: column;
}

.library-search {
    display: flex;
    align-items: center;
    gap: 7px;
    height: 22px;
    margin-bottom: 8px;
    padding-left: 6px;
}

.library-search .field {
    flex: 1;
    height: 20px;
}

.star {
    color: #000;
}

.packs {
    flex: 1;
    border: 1px solid #2e2e2e;
    background: #232323;
}

.packs h3 {
    height: 20px;
    padding-left: 10px;
    background: #191919;
    font-size: 11px;
    font-weight: 400;
    line-height: 20px;
    color: #8c8c8c;
}

.packs p {
    display: flex;
    align-items: center;
    height: 18px;
    padding-left: 11px;
    color: #8c8c8c;
}

.packs p svg {
    margin-right: 7px;
    color: #b5b5b5;
}

.packs p span {
    padding: 2px;
    white-space: nowrap;
}

.packs .selected {
    background: #303030;
}

.packs .selected span {
    background: #8f8f8f;
    color: #151515;
}

.previews {
    display: flex;
    flex: 1;
    border: 1px solid #303030;
    overflow: hidden;
}

.preview-list {
    flex: 1;
    padding: 0 8px 0 10px;
    background: #1f1f1f;
}

.preview-list figure:first-child {
    margin-top: -58px;
}

.thumb {
    display: flex;
    align-items: center;
    justify-content: center;
    height: 173px;
    background: #000;
    color: #fff;
    font: bold 20px/24px "Open Sans Condensed", "Liberation Sans", sans-serif;
}

figcaption {
    display: flex;
    align-items: center;
    gap: 7px;
    height: 44px;
    padding: 0 5px 12px 1px;
    color: #8c8c8c;
}

figcaption svg {
    color: #b0b0b0;
}

figcaption .star {
    margin-left: auto;
    color: #000;
}

.scroll {
    width: 14px;
    padding: 466px 2px 0 4px;
}

.scroll i {
    display: block;
    width: 8px;
    height: 18px;
    border-radius: 4px;
    background: #3e3e3e;
}

.composer-foot {
    display: flex;
    align-items: center;
    justify-content: flex-end;
    height: 39px;
    padding-right: 3px;
}

.apply {
    width: 68px;
}

/* right column */
.side {
    display: flex;
    flex-direction: column;
    gap: 1px;
    min-height: 0;
}

.side h2 {
    display: flex;
    align-items: center;
    justify-content: space-between;
    height: 29px;
    padding: 0 9px 0 12px;
    color: #aaa;
    font-size: 11px;
    font-weight: 400;
}

.info {
    height: 131px;
}

.info-body {
    display: flex;
    height: 64px;
    margin: 0 7px 0 5px;
    padding: 4px 0 0 2px;
    border-bottom: 2px solid #303030;
    color: #8c8c8c;
}

.swatch {
    width: 20px;
    height: 20px;
    margin: 12px 6px 0 0;
    background: #000;
}

.values {
    display: flex;
    flex-direction: column;
    line-height: 13px;
}

.values:nth-child(2) {
    width: 69px;
    height: 51px;
    margin-right: 8px;
    border-right: 2px solid #303030;
}

.info-body svg {
    margin: 23px 4px 0 1px;
}

.preview {
    height: 109px;
    padding: 1px 5px 0;
}

.preview h2 {
    padding: 0 4px 0 7px;
}

.transport {
    display: flex;
    justify-content: center;
    gap: 12px;
    height: 28px;
    padding: 8px 4px 0 0;
    border-bottom: 2px solid #303030;
    color: #444;
}

.shortcut-label {
    display: block;
    padding: 6px 0 4px 1px;
    color: #444;
}

.shortcut {
    display: flex;
    align-items: center;
    gap: 8px;
    color: #444;
}

.shortcut .select {
    width: 169px;
    background: #2a2a2a;
}

.effects {
    flex: 1;
    display: flex;
    flex-direction: column;
    overflow: hidden;
}

.effects .field {
    flex: none;
    height: 20px;
    margin: 2px 4px 2px 5px;
}

.effects ul {
    list-style: none;
    border-top: 1px solid #000;
    overflow: hidden;
}

.effects li {
    height: 17px;
    padding-left: 16px;
    border-bottom: 1px solid #1e1e1e;
    line-height: 17px;
    background: #252525;
}

.effects li::before {
    content: "";
    float: left;
    width: 5px;
    height: 5px;
    margin: 6px 0 0 -13px;
    border: solid #aaa;
    border-width: 1px 1px 0 0;
    transform: rotate(45deg);
}

.side-scroll {
    background: #1b1b1b;
}

.side-scroll i {
    display: block;
    width: 10px;
    height: 222px;
    border-radius: 5px;
    background: #303030;
}

/* timeline */
.timeline {
    display: flex;
    flex-direction: column;
    padding-left: 1px;
    background: #232323;
    border-bottom: 1px solid #3a4152;
}

.timeline-main {
    display: flex;
    flex: 1;
}

.layers {
    display: flex;
    flex-direction: column;
    width: 571px;
}

.layer-tools {
    display: flex;
    align-items: center;
    height: 34px;
    padding-left: 108px;
    color: #414141;
}

.layer-tools .field {
    width: 295px;
    height: 21px;
    margin-right: 16px;
}

.layer-tools svg + svg {
    margin-left: 12px;
}

.layer-tools svg:nth-child(3) {
    margin-left: 18px;
}

.layer-tools svg:last-child {
    margin-left: 20px;
}

.layer-head {
    display: flex;
    align-items: center;
    height: 20px;
    border-top: 1px solid #000;
    border-bottom: 1px solid #000;
    font-size: 9px;
    line-height: 12px;
    color: #aaa;
}

.layer-head > span {
    display: flex;
    align-items: center;
    height: 12px;
    border-right: 1px solid #000;
}

.switches {
    width: 69px;
    gap: 4px;
    padding-left: 7px;
}

.label-col {
    width: 32px;
    padding-left: 13px;
}

.num-col {
    width: 33px;
    padding-left: 6px;
}

.name-col {
    width: 167px;
    padding-left: 5px;
}

.modes {
    width: 137px;
    gap: 4px;
    padding-left: 5px;
}

.modes em {
    font: italic bold 12px/12px "Liberation Serif", serif;
}

.parent-col {
    width: 118px;
    padding-left: 5px;
    white-space: nowrap;
}

.layer-list {
    flex: 1;
    border-right: 1px solid #000;
}

.ruler {
    display: flex;
    flex-direction: column;
    flex: 1;
}

.work-area {
    height: 10px;
    margin: 33px 0 0 1px;
    background: #6b6b6b;
    border: solid #000;
    border-width: 1px 0;
    border-right: 6px solid #2d8ceb;
    border-radius: 0 5px 5px 0;
}

.ticks {
    display: flex;
    justify-content: space-between;
    height: 37px;
    padding: 19px 6px 0 7px;
    border-bottom: 1px solid #000;
}

.ticks i {
    width: 1px;
    height: 6px;
    background: #888;
}

.gutter {
    height: 3px;
    border-bottom: 1px solid #000;
}

.lanes {
    flex: 1;
    margin: 0 7px 0 6px;
    background: #323232;
}

.markers {
    width: 19px;
    padding-top: 65px;
    border-left: 1px solid #191919;
    color: #bbb;
}

.markers .marker {
    margin: 0 0 7px 4px;
    color: #3c3c3c;
}

.timeline-foot {
    display: flex;
    height: 18px;
}

.render {
    display: flex;
    align-items: center;
    gap: 8px;
    width: 570px;
    padding-left: 7px;
    border-top: 1px solid #000;
}

.render .blue {
    color: #2d8ceb;
}

.render p {
    width: 219px;
    margin-left: 20px;
}

.render b {
    margin-left: 2px;
    color: #555;
}

.render button {
    width: 134px;
    height: 16px;
    border: 1px solid #303030;
    border-radius: 2px;
    color: #8c8c8c;
}

.zoomer {
    display: flex;
    align-items: center;
    gap: 11px;
    width: 108px;
    padding-left: 6px;
    border-top: 1px solid #000;
    color: #404040;
}

.zoomer input {
    appearance: none;
    width: 49px;
    height: 10px;
    background: linear-gradient(transparent 4px, #444 4px 6px, transparent 6px);
}

.zoomer input::-webkit-slider-thumb {
    appearance: none;
    width: 10px;
    height: 10px;
    border: 2px solid #aaa;
    border-radius: 50%;
    background: #232323;
}

/* taskbar */
.taskbar {
    display: grid;
    grid-template-columns: 1fr auto 1fr;
    background: linear-gradient(90deg, #0a1b3b, #0a1838);
}

.apps {
    grid-column: 2;
    display: flex;
    align-items: center;
    gap: 4px;
    padding-left: 2px;
}

.apps a {
    position: relative;
    display: grid;
    place-items: center;
    width: 40px;
    height: 40px;
    border-radius: 4px;
}

.apps .open::after, .apps .current::after {
    content: "";
    position: absolute;
    bottom: 1px;
    left: 17px;
    width: 6px;
    height: 3px;
    border-radius: 2px;
    background: #98a0b2;
}

.apps .current {
    background: #1b294a;
    border: 1px solid #25345a;
}

.apps .current::after {
    left: 11px;
    bottom: 0;
    width: 16px;
    background: #1c46a5;
}

.tile {
    width: 22px;
    height: 21px;
    border-radius: 4px;
    font-size: 13px;
    font-weight: 700;
    line-height: 21px;
    text-align: center;
}

.ps {
    background: #001e36;
    color: #31a8ff;
}

.ae, .pr {
    background: #00005b;
    color: #9999ff;
}

.ai {
    background: #330000;
    color: #ff9a00;
}

.tray {
    display: flex;
    align-items: center;
    justify-content: flex-end;
    gap: 8px;
    padding-right: 19px;
    color: #fff;
}

.tray svg:first-child {
    margin-right: 5px;
}

.tray time {
    margin-left: 7px;
    font-size: 12px;
    line-height: 16px;
    text-align: right;
}

/* crash report */
.dialog {
    position: absolute;
    top: 284px;
    left: 0;
    right: 0;
    width: 796px;
    margin: 0 auto;
    overflow: hidden;
    border-radius: 8px;
    background: #f0f0f0;
    box-shadow: 0 0 1px 1px #444, 0 16px 32px rgba(0, 0, 0, .4);
    color: #111;
    font: 11px/15px "Noto Sans", "Open Sans", sans-serif;
}

.dialog-title {
    height: 30px;
    padding: 7px 8px;
    background: #f3f3f3;
    color: #939393;
}

.dialog-body {
    display: flex;
    align-items: flex-start;
    gap: 39px;
    padding: 13px 14px 16px;
}

.ae-logo {
    width: 28px;
    height: 29px;
    margin-top: 2px;
    border-radius: 5px;
    background: #00005b;
    box-shadow: 0 1px 2px rgba(0, 0, 0, .5);
    color: #9999ff;
    font-size: 16px;
    font-weight: 700;
    line-height: 27px;
    text-align: center;
}

.dialog form {
    display: flex;
    flex-direction: column;
    align-items: flex-start;
    width: 509px;
}

.dialog h2, .dialog h3 {
    font-size: 11px;
    font-weight: 700;
}

.dialog hr {
    width: 127px;
    margin: 13px 0 12px;
    border: 0;
    border-top: 1px solid #9a9a9a;
    border-bottom: 1px solid #fff;
}

.dialog h3 {
    margin-bottom: 13px;
}

.dialog p {
    white-space: nowrap;
}

.dialog form a {
    margin: 28px 0 13px;
    color: #1606a6;
}

.dialog textarea {
    width: 100%;
    height: 83px;
    margin: 11px 0 15px;
    padding: 0 3px;
    background: #fff;
    resize: none;
}

.check {
    display: flex;
    align-items: center;
    gap: 3px;
    white-space: nowrap;
}

.check input {
    appearance: none;
    width: 13px;
    height: 13px;
    border: 1px solid #666;
    border-radius: 3px;
    background: #f6f6f6;
}

.email {
    width: 300px;
    margin: 15px 0 18px 20px;
}

.email::placeholder {
    color: #838383;
}

.actions {
    display: flex;
    gap: 9px;
    margin: 15px 0 0 214px;
}

.actions button {
    width: 86px;
    height: 24px;
    border: 1px solid #d0d0d0;
    border-bottom-color: #b8b8b8;
    border-radius: 4px;
    background: #fdfdfd;
}

.actions button + button {
    width: 112px;
}
```
